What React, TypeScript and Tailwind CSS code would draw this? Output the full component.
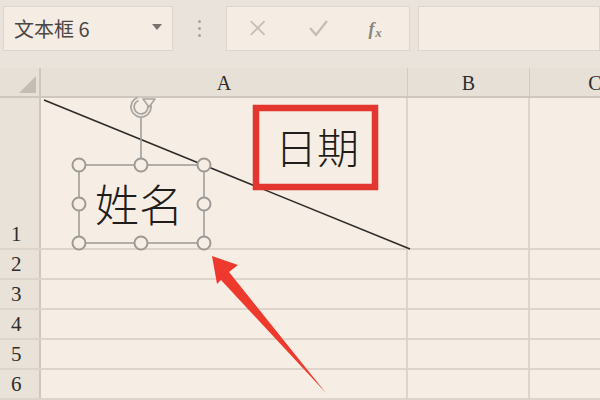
import React from "react";

const rows = [
  { label: "1", h: "h-[152px]" },
  { label: "2", h: "h-[30px]" },
  { label: "3", h: "h-[30px]" },
  { label: "4", h: "h-[30px]" },
  { label: "5", h: "h-[30px]" },
  { label: "6", h: "h-[30px]" },
];

const serif = { fontFamily: '"Liberation Serif", "DejaVu Serif", serif' };
const cjk = { fontFamily: '"Noto Sans CJK SC", "Noto Sans", sans-serif' };

function Handle({ x, y }: { x: number; y: number }) {
  return <circle cx={x} cy={y} r={6.5} fill="#f6ede4" stroke="#9d9a96" strokeWidth={2} />;
}

export default function App() {
  return (
    <div className="relative w-[600px] h-[400px] overflow-hidden bg-[#f6ede4]">
      {/* toolbar */}
      <div className="flex items-start h-[68px] bg-[#e9e3db] pt-[6px] pl-[3px]">
        <div className="flex items-center justify-between w-[170px] h-[45px] bg-[#f5ede4] border border-[#dcd5cc] pl-[10px] pr-[10px]">
          <span className="text-[20px] text-[#4a4744]" style={cjk}>
            文本框 6
          </span>
          <span className="w-0 h-0 border-l-[5px] border-r-[5px] border-t-[6px] border-l-transparent border-r-transparent border-t-[#77726d] mb-[4px]" />
        </div>
        <div className="flex flex-col gap-[4px] w-[53px] items-center pt-[14px]">
          <span className="w-[3px] h-[3px] rounded-full bg-[#aaa39b]" />
          <span className="w-[3px] h-[3px] rounded-full bg-[#aaa39b]" />
          <span className="w-[3px] h-[3px] rounded-full bg-[#aaa39b]" />
        </div>
        <div className="flex items-center w-[184px] h-[45px] bg-[#f5ede4] border border-[#dcd5cc]">
          <svg width="184" height="45" viewBox="0 0 184 45">
            <path d="M24 15 L38 29 M38 15 L24 29" stroke="#c4beb7" strokeWidth={1.8} fill="none" />
            <path d="M84 22 L90 29 L101 15" stroke="#c4beb7" strokeWidth={2.4} fill="none" />
            <text x="143" y="29" fontFamily='"Liberation Serif", serif' fontStyle="italic" fontWeight="bold" fontSize="18" fill="#8a847e">f</text>
            <text x="150" y="31" fontFamily='"Liberation Serif", serif' fontStyle="italic" fontWeight="bold" fontSize="13" fill="#8a847e">x</text>
          </svg>
        </div>
        <div className="ml-[8px] flex-1 h-[45px] bg-[#f5ede4] border border-[#dcd5cc]" />
      </div>

      {/* column headers */}
      <div className="flex h-[30px] bg-[#e7e0d7] border-b-2 border-[#cfc7bd]">
        <div className="relative w-[41px] shrink-0 border-r-2 border-[#cfc7bd]">
          <svg className="absolute right-[3px] bottom-[3px]" width="17" height="17" viewBox="0 0 17 17">
            <path d="M17 0 L17 17 L0 17 Z" fill="#c3bdb5" />
          </svg>
        </div>
        <div className="w-[367px] shrink-0 flex items-end justify-center pb-[3px] text-[20px] leading-none text-[#2f2d2b] border-r border-[#d3cbc1]" style={serif}>
          A
        </div>
        <div className="w-[122px] shrink-0 flex items-end justify-center pb-[3px] text-[20px] leading-none text-[#2f2d2b] border-r border-[#d3cbc1]" style={serif}>
          B
        </div>
        <div className="w-[130px] shrink-0 flex items-end justify-center pb-[3px] text-[20px] leading-none text-[#2f2d2b]" style={serif}>
          C
        </div>
      </div>

      {/* rows */}
      {rows.map((r) => (
        <div key={r.label} className={`flex ${r.h} border-b-2 border-[#ddd5cb]`}>
          <div className="w-[41px] shrink-0 flex items-end pl-[11px] pb-[3px] bg-[#e9e2d9] border-r-2 border-[#cfc7bd] text-[21px] leading-none text-[#2f2d2b]" style={serif}>
            {r.label}
          </div>
          <div className="w-[367px] shrink-0 border-r-2 border-[#ddd5cb]" />
          <div className="w-[122px] shrink-0 border-r-2 border-[#ddd5cb]" />
          <div className="flex-1" />
        </div>
      ))}

      {/* drawing layer: diagonal border, text box frame, highlight and arrow */}
      <svg className="absolute left-0 top-0 pointer-events-none" width="600" height="400" viewBox="0 0 600 400">
        <line x1="44" y1="100" x2="410" y2="249" stroke="#2e2c2a" strokeWidth={1.6} />
        {/* rotation handle */}
        <line x1="141" y1="118" x2="141" y2="159" stroke="#a19e9a" strokeWidth={1.6} />
        <path d="M138 99 A8.5 8.5 0 1 0 149 104" stroke="#a9a6a2" strokeWidth={5} fill="none" />
        <path d="M138 99 A8.5 8.5 0 1 0 149 104" stroke="#f6ede4" strokeWidth={1.4} fill="none" />
        <path d="M143 99 L155 99 L149 107 Z" fill="#f6ede4" stroke="#a9a6a2" strokeWidth={1.6} strokeLinejoin="round" />
        {/* text box frame */}
        <rect x="79" y="165" width="125" height="78" fill="none" stroke="#a19e9a" strokeWidth={1.6} />
        <Handle x={79} y={165} />
        <Handle x={141} y={165} />
        <Handle x={204} y={165} />
        <Handle x={79} y={204} />
        <Handle x={204} y={204} />
        <Handle x={79} y={243} />
        <Handle x={141} y={243} />
        <Handle x={204} y={243} />
        {/* red highlight box */}
        <rect x="256" y="108" width="119" height="79" fill="none" stroke="#e2362e" strokeWidth={6.5} />
        {/* red arrow */}
        <path d="M212 256 L238 265 L229 272 L326 393 L221 280 L217 284 Z" fill="#ee3a2e" />
      </svg>

      <div className="absolute left-[95px] top-[181px] text-[44px] leading-none font-light text-[#1f1d1b]" style={cjk}>
        姓名
      </div>
      <div className="absolute left-[275px] top-[125px] text-[42px] leading-none font-light text-[#1f1d1b]" style={cjk}>
        日期
      </div>
    </div>
  );
}
